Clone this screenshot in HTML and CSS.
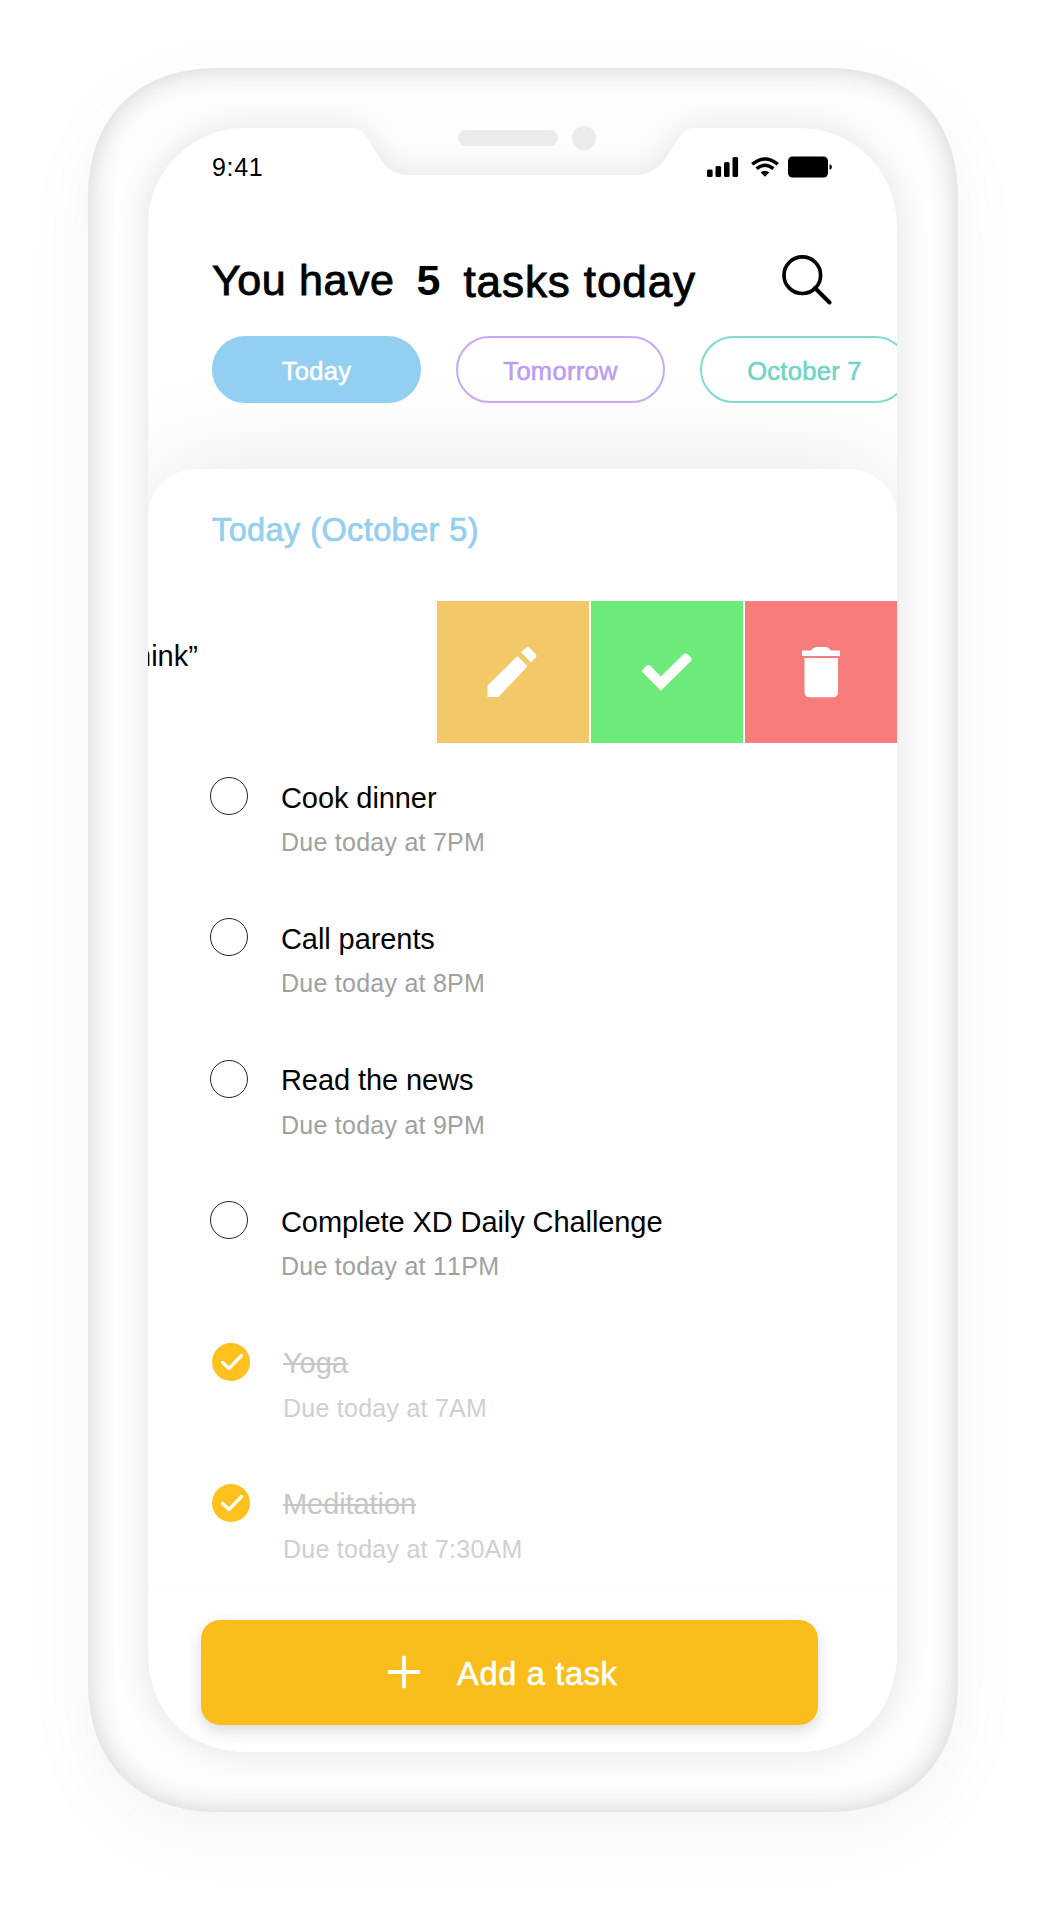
FILE: index.html
```html
<!DOCTYPE html>
<html lang="en">
<head>
<meta charset="utf-8">
<title>Tasks</title>
<link rel="stylesheet" href="styles.css">
</head>
<body>
<main class="device">
  <svg class="frame" viewBox="0 0 1046 1920" width="1046" height="1920" aria-hidden="true">
    <defs>
      <filter id="soft" x="-20%" y="-20%" width="140%" height="140%"><feGaussianBlur stdDeviation="38"/></filter>
      <filter id="edge" x="-10%" y="-10%" width="120%" height="120%"><feGaussianBlur stdDeviation="14"/></filter>
      <filter id="rim" x="-10%" y="-10%" width="120%" height="120%"><feGaussianBlur stdDeviation="17"/></filter>
      <path id="body" d="M218 68H828C909 68 958 117 958 198V1682C958 1763 909 1812 828 1812H218C137 1812 88 1763 88 1682V198C88 117 137 68 218 68Z"/>
      <path id="glass" d="M246 128H351C362 128 366 135 373 147C382 163 390 175 410 175H635C655 175 663 163 673 147C680 136 684 128 695 128H799C854 128 897 171 897 226V1650C897 1713 858 1752 795 1752H250C187 1752 148 1713 148 1650V226C148 171 191 128 246 128Z"/>
      <clipPath id="bodyClip"><use href="#body"/></clipPath>
    </defs>
    <use href="#body" transform="translate(0 22)" filter="url(#soft)" opacity=".045"/>
    <use href="#body" fill="#fdfdfd"/>
    <g clip-path="url(#bodyClip)">
      <path d="M0 0H1046V1920H0ZM218 68H828C909 68 958 117 958 198V1682C958 1763 909 1812 828 1812H218C137 1812 88 1763 88 1682V198C88 117 137 68 218 68Z" fill-rule="evenodd" filter="url(#edge)" opacity=".18"/>
      <use href="#glass" filter="url(#rim)" opacity=".1"/>
    </g>
    <use href="#glass" fill="#fff"/>
    <rect x="458" y="130" width="100" height="16" rx="8" fill="#ebebeb"/>
    <circle cx="584" cy="138" r="12" fill="#ebebeb"/>
  </svg>

  <div class="screen">
    <header class="header">
      <div class="status">
        <span class="time">9:41</span>
        <svg width="126" height="22" viewBox="0 0 126 22" aria-hidden="true">
          <rect x="1" y="13.5" width="5.6" height="7.5" rx="1.5"/><rect x="9.5" y="10" width="5.6" height="11" rx="1.5"/><rect x="18" y="6" width="5.6" height="15" rx="1.5"/><rect x="26.5" y="1" width="5.6" height="20" rx="1.5"/>
          <g fill="none" stroke="#000" stroke-width="3.4"><path d="M46.200 8.300Q59 -2.500 71.800 8.300"/><path d="M50.600 12.600Q59 5.700 67.400 12.600"/></g>
          <path d="M54.700 16.400Q59 13 63.300 16.400L59 20.800Z"/>
          <rect x="82" y=".5" width="40" height="21" rx="4.500"/><path d="M123.500 8.200Q126 8.700 126 11T123.500 13.800Z"/>
        </svg>
      </div>
      <div class="heading">
        <h1><span class="lead">You have</span><b>5</b><span class="tail">tasks today</span></h1>
        <svg width="50" height="50" viewBox="0 0 50 50" fill="none" stroke="#000" stroke-width="3.700" aria-hidden="true"><circle cx="20.300" cy="20.200" r="18.300"/><path d="M33 33L47.500 47.500" stroke-width="4" stroke-linecap="round"/></svg>
      </div>
      <nav class="days">
        <span class="day day-today">Today</span>
        <span class="day day-tomorrow">Tomorrow</span>
        <span class="day day-later">October 7</span>
      </nav>
    </header>

    <section class="sheet">
      <h2>Today (October 5)</h2>
      <div class="swiped">
        <span class="swiped-title">hink”</span>
        <div class="actions">
          <span class="action edit"><svg width="50" height="52" viewBox="0 0 50 52"><path d="M30.500 10L40.500 20.200L11.500 51H.5V39.500ZM39.200 1.500Q40.700 0 42.200 1.500L48.900 8.500Q50.200 10 48.900 11.500L44 16.500L34 6.200Z"/></svg></span>
          <span class="action done"><svg width="50" height="38" viewBox="0 0 50 38"><path d="M.8 19.500Q-.4 18 .8 16.500L5 12.300Q6.500 11 8 12.300L18.800 23.500L42 .8Q44 -.3 46 1.500L49 4.500Q50.500 6.300 49 8L18.800 37.700Z"/></svg></span>
          <span class="action remove"><svg width="40" height="52" viewBox="0 0 40 52"><path d="M1 4.500H10Q12.500 1 15 1H25Q27.500 1 30 4.500H39V10H1Z"/><path d="M3.500 12H37V46Q37 51.300 32 51.300H8.500Q3.500 51.300 3.500 46Z"/></svg></span>
        </div>
      </div>
      <ul class="tasks">
        <li class="task"><i class="ring"></i><div><h3>Cook dinner</h3><p>Due today at 7PM</p></div></li>
        <li class="task"><i class="ring"></i><div><h3>Call parents</h3><p>Due today at 8PM</p></div></li>
        <li class="task"><i class="ring"></i><div><h3>Read the news</h3><p>Due today at 9PM</p></div></li>
        <li class="task"><i class="ring"></i><div><h3>Complete XD Daily Challenge</h3><p>Due today at 11PM</p></div></li>
        <li class="task complete"><svg class="tick" viewBox="0 0 38 38"><circle cx="19" cy="19" r="19" fill="#ffc11d"/><path d="M10.500 19.500L17 25.500L29.500 12.500" fill="none" stroke="#fff" stroke-width="3.300" stroke-linecap="round"/></svg><div><h3>Yoga</h3><p>Due today at 7AM</p></div></li>
        <li class="task complete"><svg class="tick" viewBox="0 0 38 38"><circle cx="19" cy="19" r="19" fill="#ffc11d"/><path d="M10.500 19.500L17 25.500L29.500 12.500" fill="none" stroke="#fff" stroke-width="3.300" stroke-linecap="round"/></svg><div><h3>Meditation</h3><p>Due today at 7:30AM</p></div></li>
      </ul>
    </section>

    <footer class="footer">
      <button class="add"><svg width="34" height="34" viewBox="0 0 34 34" fill="none" stroke="#fff" stroke-width="4" stroke-linecap="round" aria-hidden="true"><path d="M17 2.500V31.500M2.500 17H31.500"/></svg><span>Add a task</span></button>
    </footer>
  </div>
</main>
</body>
</html>
```

FILE: styles.css
```css
* { box-sizing: border-box; }

body {
  margin: 0;
  width: 1046px;
  height: 1920px;
  padding: 68px 88px;
  background: #fff;
  color: #000;
  font-family: "Liberation Sans", Arial, sans-serif;
  overflow: hidden;
}

h1, h2, h3, p, ul { margin: 0; padding: 0; font-weight: 400; }

.device {
  position: relative;
  width: 870px;
  height: 1744px;
  padding: 60px 61px 60px 60px;
}

.frame { position: absolute; left: -88px; top: -68px; }

.screen {
  position: relative;
  display: flex;
  flex-direction: column;
  height: 1624px;
  overflow: hidden;
  border-radius: 0 0 98px 98px;
}

.header {
  position: relative;
  z-index: 1;
  flex: none;
  height: 341px;
  padding-top: 25px;
}

.status, .heading {
  display: flex;
  align-items: center;
  justify-content: space-between;
  padding: 0 65px 0 64px;
}

.status { height: 28px; }
.time { font-size: 25px; line-height: 28px; letter-spacing: .7px; }

.heading { height: 50px; margin-top: 74px; }
h1 {
  display: flex;
  align-items: baseline;
  font-size: 43px;
  line-height: 50px;
  letter-spacing: .6px;
  white-space: nowrap;
  -webkit-text-stroke: .9px #000;
}
h1 b { margin: 0 23px 0 22px; letter-spacing: 0; -webkit-text-stroke: 0; }
.tail { font-size: 44px; line-height: 54px; letter-spacing: .9px; transform: translateY(2px); }

.days { display: flex; gap: 35px; margin: 31px 0 0 64px; }
.day {
  flex: none;
  width: 209px;
  height: 67px;
  border: 2px solid;
  border-radius: 34px;
  font-size: 25.500px;
  line-height: 66px;
  letter-spacing: .3px;
  text-align: center;
  -webkit-text-stroke: .6px;
}
.day-today { background: #93cff0; border-color: #93cff0; color: #fff; }
.day-tomorrow { border-color: #c8a9f5; color: #bf9bf3; }
.day-later { border-color: #80dacd; color: #70d5c6; }

.sheet {
  flex: 1;
  min-height: 0;
  padding-top: 41px;
  border-radius: 48px 48px 0 0;
  background: #fff;
  box-shadow: 0 0 110px rgba(0, 0, 0, .1);
}
h2 {
  margin: 0 0 51px 64px;
  color: #93cff0;
  font-size: 32.500px;
  line-height: 40px;
  letter-spacing: .4px;
  -webkit-text-stroke: .7px;
}

.swiped {
  display: flex;
  justify-content: space-between;
  height: 141.5px;
}
.swiped-title {
  margin-left: -13px;
  padding-top: 37px;
  font-size: 29px;
  line-height: 36px;
}
.actions { display: flex; gap: 2px; }
.action {
  display: flex;
  align-items: center;
  justify-content: center;
  width: 152px;
  fill: #fff;
}
.edit { padding-right: 3px; background: #f3c868; }
.done { background: #6ceb7a; }
.remove { background: #f67b7b; }

.tasks { list-style: none; }
.task {
  display: flex;
  gap: 33px;
  height: 141.4px;
  padding: 34.5px 0 0 62px;
}
.ring, .tick { flex: none; width: 38px; height: 38px; }
.ring { border: 1.5px solid #222; border-radius: 50%; }
h3 { margin-top: 2.500px; font-size: 29px; line-height: 36px; letter-spacing: -.08px; }
p { margin-top: 11.500px; color: #a0a0a0; font-size: 25px; line-height: 30px; letter-spacing: .25px; font-kerning: none; }
.complete { padding-left: 64px; color: #c6c6c6; }
.complete h3 { text-decoration: line-through; text-decoration-thickness: 2px; }
.complete p { color: #cfcfcf; }

.footer {
  position: relative;
  flex: none;
  height: 161px;
  padding: 28.500px 79px 0 53px;
  background: #fff;
  box-shadow: 0 0 6px rgba(0, 0, 0, .05);
}
.add {
  display: flex;
  align-items: center;
  gap: 36px;
  width: 617px;
  height: 105px;
  padding: 0 0 0 186px;
  border: 0;
  border-radius: 19px;
  background: #f9be1b;
  box-shadow: 0 6px 16px rgba(0, 0, 0, .14);
  color: #fff;
  font: 32.500px "Liberation Sans", Arial, sans-serif;
  letter-spacing: .7px;
  -webkit-text-stroke: .6px;
}
.add span { padding-top: 4px; }
```
